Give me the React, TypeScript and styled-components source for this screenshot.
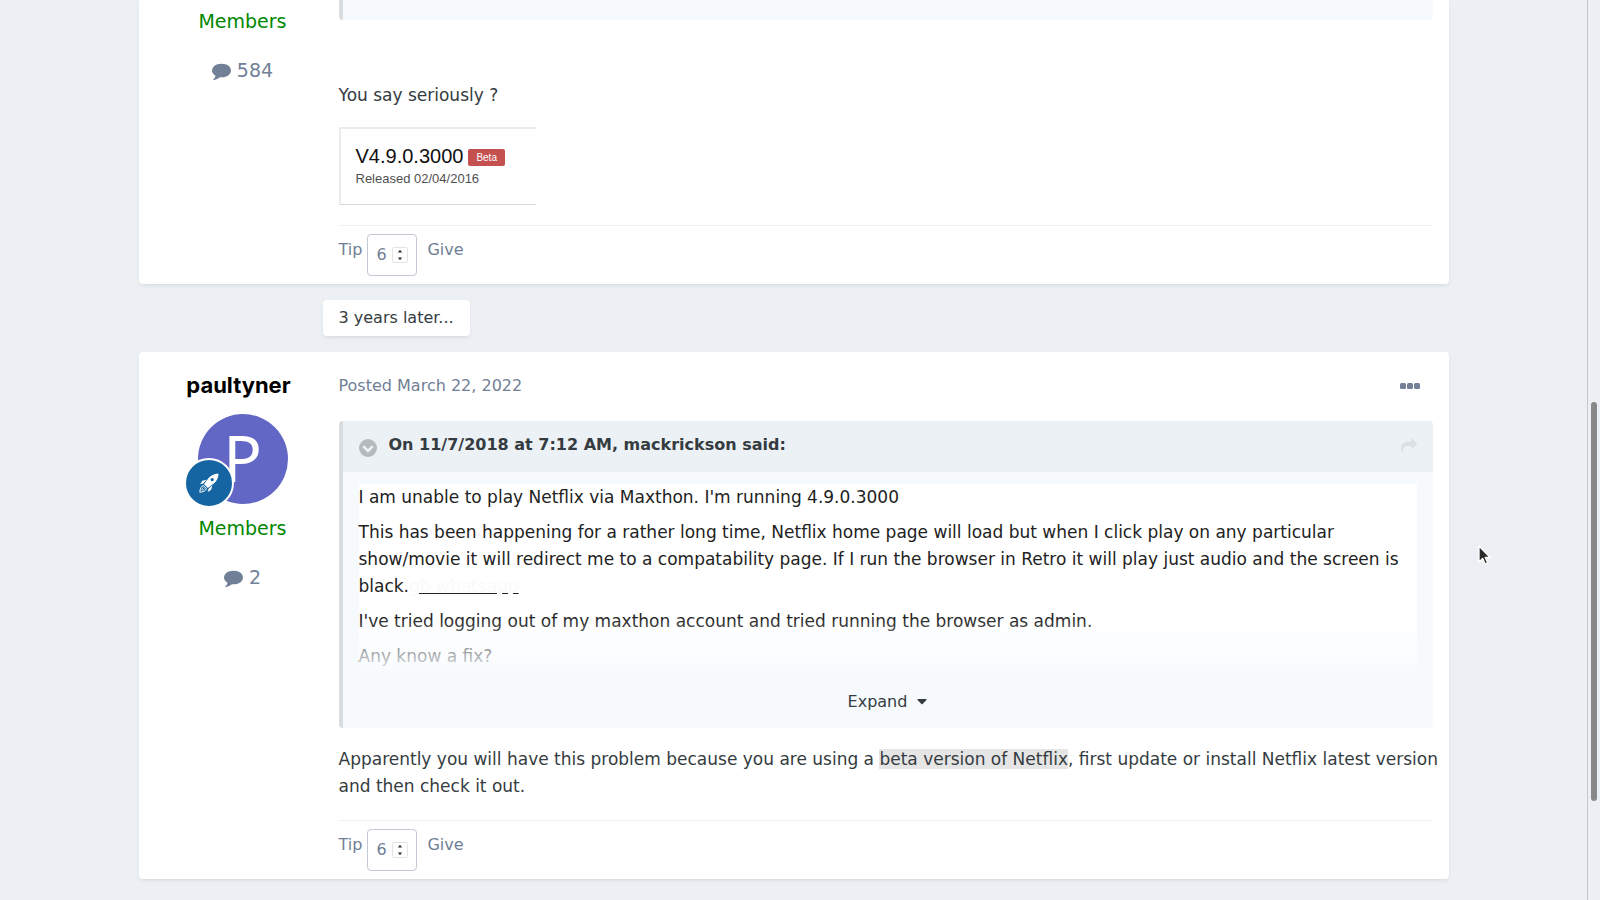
import React from "react";
import styled, { createGlobalStyle } from "styled-components";

const GlobalStyle = createGlobalStyle`
  *, *::before, *::after { box-sizing: border-box; }
  body {
    margin: 0;
    background: #eceff4;
    color: #353c41;
    font-family: "DejaVu Sans", sans-serif;
    font-size: 16px;
    line-height: 24px;
    overflow: hidden;
  }
  p { margin: 0; }
  button, input { font: inherit; color: inherit; }
  button { padding: 0; border: 0; background: none; cursor: pointer; }
  a { color: inherit; text-decoration: none; }
`;

const Page = styled.div`
  padding: 0 13px 20px 0;
  min-height: 100vh;
`;

const Topic = styled.main`
  max-width: 1310px;
  margin: 0 auto;
`;

const Post = styled.article<{ $continued?: boolean }>`
  display: grid;
  grid-template-columns: 176px minmax(0, 1fr);
  gap: 8px;
  padding: ${(p) => (p.$continued ? "0 16px 8px" : "20px 16px 8px")};
  background: #fff;
  border-radius: ${(p) => (p.$continued ? "0 0 4px 4px" : "4px")};
  box-shadow: 0 2px 4px -1px rgba(0, 0, 0, 0.1);
`;

const Author = styled.aside<{ $continued?: boolean }>`
  display: flex;
  flex-direction: column;
  align-items: center;
  padding-top: ${(p) => (p.$continued ? "7px" : "0")};
`;

const AuthorName = styled.h3`
  margin: 0;
  padding-right: 8px;
  font-family: Inter, sans-serif;
  font-size: 22px;
  font-weight: 700;
  line-height: 26px;
  color: #000;
`;

const AvatarLink = styled.a`
  position: relative;
  margin: 16px 0 10px;
  width: 90px;
  height: 90px;
  border-radius: 50%;
  background: #6266c4;
  color: #fff;
  font-family: "Noto Sans", sans-serif;
  font-size: 64px;
  line-height: 88px;
  text-align: center;
`;

const RankBadge = styled.span`
  position: absolute;
  left: -14px;
  bottom: -4px;
  width: 50px;
  height: 50px;
  display: grid;
  place-items: center;
  border: 2px solid #fff;
  border-radius: 50%;
  background: #1465a1;
`;

const Group = styled.span`
  font-size: 19px;
  line-height: 28px;
  color: #080;
`;

const PostCount = styled.a`
  display: flex;
  align-items: center;
  gap: 6px;
  margin-top: 21px;
  font-size: 19px;
  line-height: 28px;
  color: #718096;
`;

const Body = styled.div`
  min-width: 0;
`;

const PostHead = styled.header`
  display: flex;
  justify-content: space-between;
  align-items: center;
  padding-right: 13px;
  height: 27px;
  margin-bottom: 22px;
  color: #718096;

  svg { display: block; }
`;

const Quote = styled.blockquote`
  margin: 0;
  border-left: 4px solid #d8dddf;
  border-radius: 4px;
  background: #f6fafd;
  overflow: hidden;
`;

const QuoteTail = styled(Quote)`
  height: 20px;
  border-radius: 0 0 4px 4px;
`;

const QuoteHead = styled.div`
  display: flex;
  align-items: flex-start;
  gap: 12px;
  height: 51px;
  padding: 12px 16px 0;
  background: #ecf1f5;
  font-weight: 700;

  cite { flex: 1; font-style: normal; }
  svg { display: block; }
`;

const FoldButton = styled.button`
  padding-top: 6px;
  color: #b5babd;
`;

const JumpLink = styled.a`
  padding-top: 5px;
  color: #dbe0e3;
`;

const QuoteText = styled.div`
  position: relative;
  display: flex;
  flex-direction: column;
  gap: 8px;
  margin: 12px 16px 0;
  padding-bottom: 3px;
  background: #fff;
  color: #222;
  font-size: 17px;
  line-height: 27px;

  &::after {
    content: "";
    position: absolute;
    inset: auto 0 0;
    height: 56px;
    background: linear-gradient(rgba(248, 251, 254, 0), rgba(248, 251, 254, 0.94));
  }
`;

const FaintLink = styled.a`
  color: #fafafa;
  text-decoration: underline;
  text-decoration-color: #222;
`;

const ExpandButton = styled.button`
  display: flex;
  justify-content: center;
  align-items: center;
  gap: 10px;
  width: 100%;
  height: 55px;
  padding-top: 3px;
`;

const Message = styled.div<{ $after: "tail" | "quote" }>`
  margin-right: -12px;
  padding: ${(p) => (p.$after === "tail" ? "62px 0 20px" : "18px 0 20px")};
  font-size: 17px;
  line-height: 27px;

  mark { background: #e5e5e5; color: inherit; }
`;

const Release = styled.figure`
  width: 197px;
  height: 78px;
  margin: 18px 0 0;
  padding: 15px;
  border: solid #ebebeb;
  border-width: 2px 0 1px 2px;
  border-bottom-color: #d6d6d6;
  font-family: "Liberation Sans", sans-serif;
`;

const ReleaseTitle = styled.div`
  display: flex;
  align-items: center;
  gap: 5px;
  font-size: 20px;
  line-height: 24px;
  color: #111;
`;

const BetaTag = styled.span`
  margin-top: 2px;
  padding: 0 8px;
  border-radius: 2px;
  background: #c55050;
  color: #fff;
  font-size: 10px;
  line-height: 17px;
`;

const ReleaseDate = styled.div`
  font-size: 13px;
  line-height: 22px;
  color: #505050;
`;

const Controls = styled.form`
  display: flex;
  align-items: flex-start;
  border-top: 1px solid #eff0f2;
  padding-top: 8px;
  color: #718096;

  label, button { line-height: 31px; }
  label { margin-right: 5px; }
`;

const AmountBox = styled.div`
  display: flex;
  align-items: center;
  gap: 2px;
  width: 50px;
  height: 42px;
  margin-right: 10px;
  padding-left: 8px;
  border: 1px solid #c3c8d4;
  border-radius: 4px;
`;

const Amount = styled.input`
  width: 14px;
  height: 24px;
  padding: 0;
  border: 0;
  outline: 0;
  background: none;
  appearance: textfield;

  &::-webkit-inner-spin-button { display: none; }
`;

const TimeGap = styled.div`
  width: fit-content;
  margin: 16px 0 16px 184px;
  padding: 6px 16px;
  border-radius: 4px;
  background: #fff;
  box-shadow: 0 2px 4px -1px rgba(0, 0, 0, 0.1);
`;

const ScrollTrack = styled.div`
  position: fixed;
  inset: 0 0 0 auto;
  width: 13px;
  border-left: 1px solid #c2c7cc;
  background: #eceff4;
`;

const ScrollThumb = styled.div`
  position: absolute;
  top: 402px;
  right: 3px;
  width: 6px;
  height: 399px;
  border-radius: 3px;
  background: #888;
`;

const Pointer = styled.svg`
  position: absolute;
  left: 1477px;
  top: 544px;
`;

const CommentIcon = () => (
  <svg width="19" height="19" viewBox="0 0 1792 1792" fill="currentColor" aria-hidden="true">
    <path d="M1792 896q0 174-120 321.5t-326 233-450 85.5q-70 0-145-8-198 175-460 242-49 14-114 22h-5q-15 0-27-10.5t-16-27.5v-1q-3-4-.5-12t2-10 4.5-9.5l6-9 7-8.5 8-9q7-8 31-34.5t34.5-38 31-39.5 32.5-51 27-59 26-76q-157-89-247.5-220t-90.5-281q0-174 120-321.5t326-233 450-85.5 450 85.5 326 233 120 321.5z" />
  </svg>
);

const DotsIcon = () => (
  <svg width="20" height="6" viewBox="0 0 20 6" fill="currentColor" aria-hidden="true">
    <rect width="6" height="6" rx="1.5" />
    <rect x="7" width="6" height="6" rx="1.5" />
    <rect x="14" width="6" height="6" rx="1.5" />
  </svg>
);

const FoldIcon = () => (
  <svg width="18" height="18" viewBox="0 0 18 18" aria-hidden="true">
    <circle cx="9" cy="9" r="9" fill="currentColor" />
    <path d="M4.2 7.2 9 12l4.8-4.8" fill="none" stroke="#ecf1f5" strokeWidth="2.6" />
  </svg>
);

const ShareIcon = () => (
  <svg width="16" height="16" viewBox="0 0 1792 1792" fill="currentColor" aria-hidden="true">
    <path d="M1792 640q0 26-19 45l-512 512q-19 19-45 19t-45-19-19-45v-256h-224q-98 0-175.5 6t-154 21.5-133 42.5-105.5 69.5-80 101-48.5 138.5-17.5 181q0 55 5 123 0 6 2.5 23.5t2.5 26.5q0 15-8.5 25t-23.5 10q-16 0-28-17-7-9-13-22t-13.5-30-10.5-24q-127-285-127-451 0-199 53-333 162-403 875-403h224v-256q0-26 19-45t45-19 45 19l512 512q19 19 19 45z" />
  </svg>
);

const CaretIcon = () => (
  <svg width="10" height="6" viewBox="0 0 10 6" fill="currentColor" aria-hidden="true">
    <path d="M.9 0h8.2q.9.3.4 1L5.6 5.1q-.6.5-1.2 0L.5 1Q0 .3.9 0z" />
  </svg>
);

const RocketIcon = () => (
  <svg width="20" height="20" viewBox="0 0 20 20" aria-hidden="true">
    <path
      fill="#fff"
      fillRule="evenodd"
      d="M19.5.5C15 .6 11.6 2.6 9.2 5.6L5 11.2l3.8 3.8 5.7-4.2C17.8 8.2 19.5 5 19.5.5zM13.2 4.900a1.700 1.700 0 1 1 0 3.400 1.700 1.700 0 0 1 0-3.400z"
    />
    <path fill="#fff" d="M7.800 6.700 3.300 7.800 1.200 11.300l3-.9zM13.300 12.200l-1.100 4.500-3.500 2.400.9-3.300z" />
    <path
      d="M4.400 12.600C2.300 13 1.100 15.500.8 19.200c3.700-.3 6.200-1.500 6.600-3.600M4.400 12.600l3 3"
      fill="none"
      stroke="#fff"
      strokeWidth="1"
    />
    <path d="M4.600 14.200c-1 .4-1.500 1.500-1.800 3 1.500-.3 2.600-.8 3-1.800" fill="none" stroke="#fff" strokeWidth=".7" />
  </svg>
);

const SpinnerIcon = () => (
  <svg width="16" height="16" viewBox="0 0 16 16" aria-hidden="true">
    <rect x=".5" y=".5" width="15" height="15" rx="1" fill="#fff" stroke="#e3e3e3" />
    <path d="M8 2.700 10.200 5.500H5.800zM8 13.300l2.200-2.800H5.800z" fill="#333" />
  </svg>
);

function TipControls({ id }: { id: string }) {
  return (
    <Controls onSubmit={(e) => e.preventDefault()}>
      <label htmlFor={id}>Tip</label>
      <AmountBox>
        <Amount id={id} type="number" defaultValue={6} />
        <SpinnerIcon />
      </AmountBox>
      <button type="submit">Give</button>
    </Controls>
  );
}

export default function App() {
  return (
    <>
      <GlobalStyle />
      <Page>
        <Topic>
          <Post $continued>
            <Author $continued>
              <Group>Members</Group>
              <PostCount href="#posts">
                <CommentIcon />
                584
              </PostCount>
            </Author>
            <Body>
              <QuoteTail />
              <Message $after="tail">
                <p>You say seriously ?</p>
                <Release>
                  <ReleaseTitle>
                    V4.9.0.3000 <BetaTag>Beta</BetaTag>
                  </ReleaseTitle>
                  <ReleaseDate>Released 02/04/2016</ReleaseDate>
                </Release>
              </Message>
              <TipControls id="tip-first" />
            </Body>
          </Post>

          <TimeGap>3 years later...</TimeGap>

          <Post>
            <Author>
              <AuthorName>
                <a href="#paultyner">paultyner</a>
              </AuthorName>
              <AvatarLink href="#paultyner">
                P
                <RankBadge>
                  <RocketIcon />
                </RankBadge>
              </AvatarLink>
              <Group>Members</Group>
              <PostCount href="#posts">
                <CommentIcon />2
              </PostCount>
            </Author>
            <Body>
              <PostHead>
                <a href="#post">Posted March 22, 2022</a>
                <button type="button" aria-label="More options">
                  <DotsIcon />
                </button>
              </PostHead>
              <Quote>
                <QuoteHead>
                  <FoldButton type="button" aria-label="Collapse quote">
                    <FoldIcon />
                  </FoldButton>
                  <cite>On 11/7/2018 at 7:12 AM, mackrickson said:</cite>
                  <JumpLink href="#source" aria-label="Go to quoted post">
                    <ShareIcon />
                  </JumpLink>
                </QuoteHead>
                <QuoteText>
                  <p>I am unable to play Netflix via Maxthon. I'm running 4.9.0.3000</p>
                  <p>
                    This has been happening for a rather long time, Netflix home page will load but when I click play
                    on any particular show/movie it will redirect me to a compatability page. If I run the browser in
                    Retro it will play just audio and the screen is black.
                    <FaintLink href="#link">gb whatsapp</FaintLink>
                  </p>
                  <p>I've tried logging out of my maxthon account and tried running the browser as admin.</p>
                  <p>Any know a fix?</p>
                </QuoteText>
                <ExpandButton type="button">
                  Expand
                  <CaretIcon />
                </ExpandButton>
              </Quote>
              <Message $after="quote">
                <p>
                  Apparently you will have this problem because you are using a <mark>beta version of Netflix</mark>,
                  first update or install Netflix latest version and then check it out.
                </p>
              </Message>
              <TipControls id="tip-second" />
            </Body>
          </Post>
        </Topic>
      </Page>
      <ScrollTrack>
        <ScrollThumb />
      </ScrollTrack>
      <Pointer width="16" height="22" viewBox="0 0 16 22" aria-hidden="true">
        <path
          d="M2 2v16l3.700-3.500 2.500 5.500 2.500-1.100-2.500-5.400h5z"
          fill="#2b2b2b"
          stroke="#fff"
          strokeWidth="1.300"
          strokeLinejoin="round"
        />
      </Pointer>
    </>
  );
}
